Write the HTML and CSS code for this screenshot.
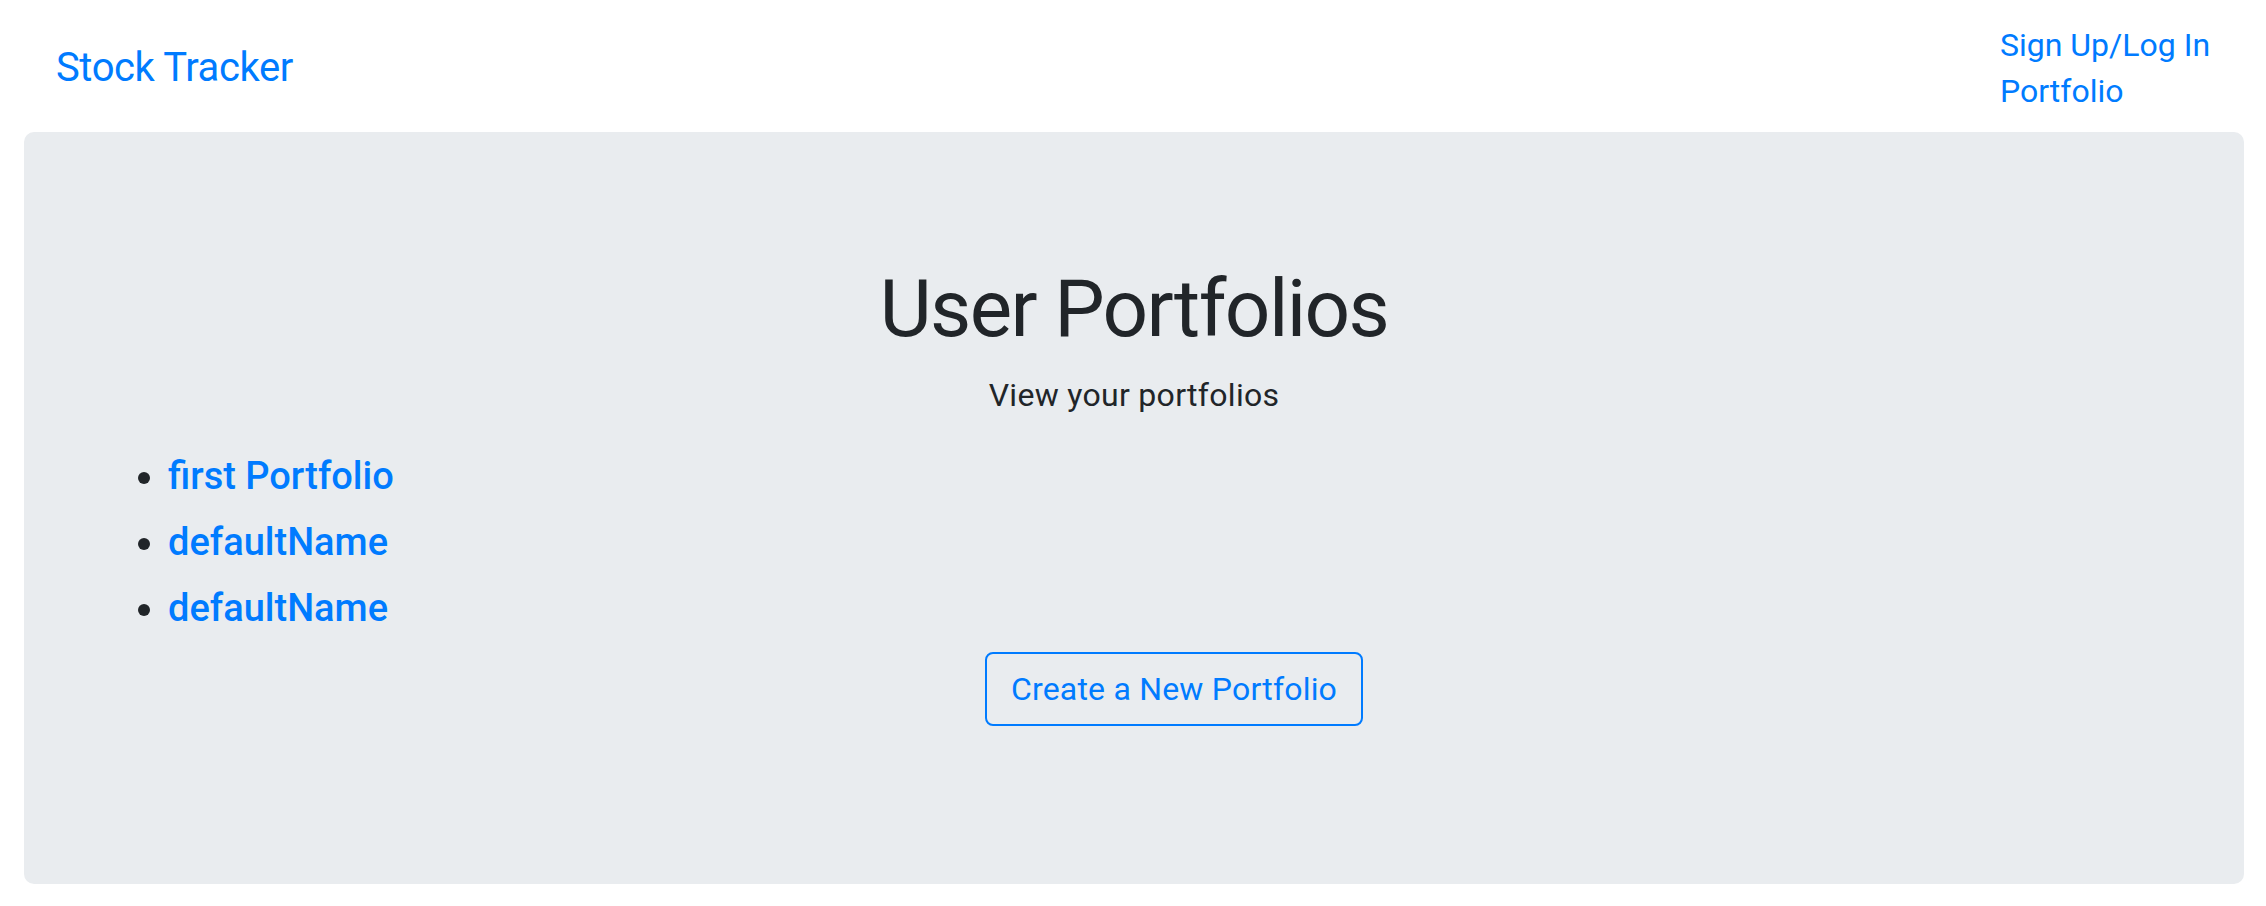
FILE: index.html
```html
<!DOCTYPE html>
<html lang="en">
<head>
<meta charset="utf-8">
<title>Stock Tracker</title>
<link rel="stylesheet" href="styles.css">
</head>
<body>
<nav class="navbar">
  <a class="brand" href="#">Stock Tracker</a>
  <div class="nav-links">
    <a class="nav-link" href="#">Sign Up/Log In</a>
    <a class="nav-link" href="#">Portfolio</a>
  </div>
</nav>
<main class="jumbotron">
  <h1 class="title">User Portfolios</h1>
  <p class="lead">View your portfolios</p>
  <ul class="portfolio-list">
    <li class="portfolio-item"><a href="#">first Portfolio</a></li>
    <li class="portfolio-item"><a href="#">defaultName</a></li>
    <li class="portfolio-item"><a href="#">defaultName</a></li>
    <div class="actions">
      <button class="btn-outline" type="button">Create a New Portfolio</button>
    </div>
  </ul>
</main>
</body>
</html>
```

FILE: styles.css
```css
html, body {
  margin: 0;
  padding: 0;
  background: #ffffff;
}

body {
  font-family: Roboto, "Noto Sans", "Liberation Sans", sans-serif;
  color: #212529;
  font-size: 32px;
  line-height: 1.5;
}

a {
  color: #007bff;
  text-decoration: none;
}

.navbar {
  display: flex;
  align-items: center;
  justify-content: space-between;
  padding: 22px 54px 18px 56px;
}

.brand {
  font-size: 40px;
  line-height: 60px;
  letter-spacing: -0.4px;
}

.nav-links {
  display: flex;
  flex-direction: column;
  width: 212px;
}

.nav-link {
  font-size: 32px;
  line-height: 46px;
  white-space: nowrap;
}

.jumbotron {
  margin: 0 22px 0 24px;
  background: #e9ecef;
  border-radius: 10px;
  padding: 129px 64px 128px;
  height: 752px;
  box-sizing: border-box;
}

.title {
  margin: 0 0 14px;
  font-size: 80px;
  line-height: 96px;
  font-weight: 400;
  letter-spacing: -1.6px;
  text-align: center;
}

.lead {
  margin: 0;
  font-size: 32px;
  line-height: 48px;
  letter-spacing: 0.3px;
  text-align: center;
}

.portfolio-list {
  margin: 24px 0 32px;
  padding-left: 80px;
}

.portfolio-item {
  font-size: 38px;
  line-height: 66px;
  font-weight: 500;
}

.actions {
  display: flex;
  justify-content: center;
  margin-top: 11px;
}

.btn-outline {
  font-family: inherit;
  font-size: 32px;
  line-height: 48px;
  letter-spacing: 0.2px;
  color: #007bff;
  background: transparent;
  border: 2px solid #007bff;
  border-radius: 8px;
  padding: 11px 24px;
}
```
